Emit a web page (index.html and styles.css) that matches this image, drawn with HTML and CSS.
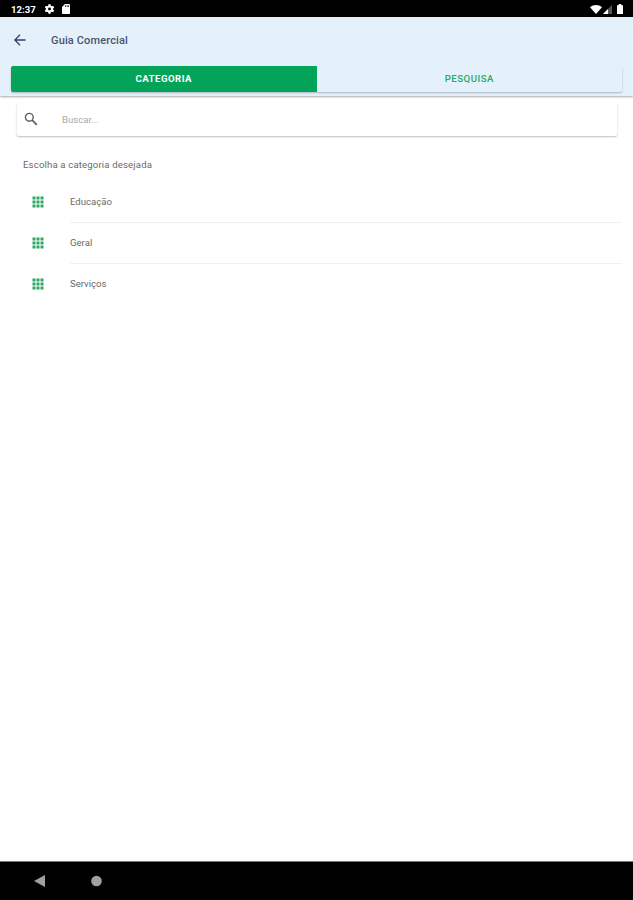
FILE: index.html
```html
<!doctype html>
<html lang="pt-BR">
<head>
<meta charset="utf-8">
<title>Guia Comercial</title>
<link rel="stylesheet" href="styles.css">
</head>
<body>
<svg class="defs">
	<symbol id="grid" viewBox="0 0 12 12">
		<path d="M0.5 0.5h3v3h-3zM4.5 0.5h3v3h-3zM8.5 0.5h3v3h-3zM0.5 4.5h3v3h-3zM4.5 4.5h3v3h-3zM8.5 4.5h3v3h-3zM0.5 8.5h3v3h-3zM4.5 8.5h3v3h-3zM8.5 8.5h3v3h-3z"/>
	</symbol>
</svg>

<div class="statusbar">
	<span class="clock">12:37</span>
	<svg class="gear" width="12" height="12" viewBox="1 1 22 22"><path fill="#fff" d="M19.400 13a7.500 7.500 0 0 0 0-2l2.100-1.600-2-3.500-2.500 1a7.400 7.400 0 0 0-1.700-1L14.900 3.200h-4l-.4 2.700a7.400 7.400 0 0 0-1.700 1l-2.500-1-2 3.500L6.400 11a7.500 7.500 0 0 0 0 2l-2.100 1.600 2 3.500 2.500-1a7.400 7.400 0 0 0 1.700 1l.4 2.700h4l.4-2.700a7.400 7.400 0 0 0 1.700-1l2.500 1 2-3.500zM12.900 14.700a2.700 2.700 0 1 1 0-5.400 2.700 2.700 0 0 1 0 5.400z"/></svg>
	<svg class="sdcard" width="12" height="12" viewBox="0 0 24 24"><path fill="#fff" d="M18 2h-8L4 8v12c0 1.100.9 2 2 2h12c1.100 0 2-.9 2-2V4c0-1.100-.9-2-2-2zm-6 6h-1.500V4.500H12zm3 0h-1.500V4.500H15zm3 0h-1.500V4.500H18z"/></svg>
	<span class="signals">
		<svg width="12" height="9" viewBox="0 0 12 9"><path fill="#fff" d="M0 2.200C3.500-.7 8.500-.7 12 2.200L6 9z"/></svg>
		<svg width="9" height="9" viewBox="0 0 9 9"><path fill="#555" d="M0 9L9 0v9z"/><path fill="#fff" d="M0 9l5-5v5z"/></svg>
		<svg class="battery" width="6" height="10" viewBox="0 0 6 10"><path fill="#fff" d="M0 1.200h1.700V0h2.600v1.200H6V10H0z"/></svg>
	</span>
</div>

<div class="header">
	<div class="title">
		<svg width="12" height="12" viewBox="0 0 12 12"><path fill="none" stroke="#343e66" stroke-width="1.300" d="M11.500 6H1.200M6 .8L.9 6 6 11.200"/></svg>
		<h1>Guia Comercial</h1>
	</div>
	<div class="tabs">
		<div class="tab active">CATEGORIA</div>
		<div class="tab">PESQUISA</div>
	</div>
</div>

<div class="content">
	<div class="search">
		<svg width="14" height="14" viewBox="0 0 14 14"><circle cx="5.300" cy="5.300" r="3.900" fill="none" stroke="#606060" stroke-width="1.400"/><path stroke="#606060" stroke-width="1.800" d="M8.200 8.200l4.600 4.600"/></svg>
		<span>Buscar...</span>
	</div>
	<p class="hint">Escolha a categoria desejada</p>
	<ul class="list">
		<li><svg class="icon"><use href="#grid"/></svg><span>Educação</span></li>
		<li><svg class="icon"><use href="#grid"/></svg><span>Geral</span></li>
		<li><svg class="icon"><use href="#grid"/></svg><span>Serviços</span></li>
	</ul>
</div>

<div class="navbar">
	<svg width="11" height="12" viewBox="0 0 11 12"><path fill="#a0a0a0" d="M11 0v12L0 6z"/></svg>
	<svg width="11" height="12" viewBox="0 0 11 12"><circle cx="5.500" cy="6" r="5.300" fill="#a0a0a0"/></svg>
</div>
</body>
</html>
```
FILE: styles.css
```css
* {
	box-sizing: border-box;
}
body {
	margin: 0;
	height: 900px;
	display: flex;
	flex-direction: column;
	background-color: #fff;
	font-family: Roboto, sans-serif;
	font-size: 9.6px;
	color: #6a6a6a;
	overflow: hidden;
}
svg {
	display: block;
	flex: none;
}
.defs {
	display: none;
}

.statusbar {
	height: 17px;
	flex: none;
	display: flex;
	align-items: center;
	padding: 1px 10px 0 11px;
	background-color: #000;
	color: #fff;
}
.clock {
	width: 32px;
	font-size: 9.6px;
	font-weight: 700;
}
.sdcard {
	margin-left: 5px;
}
.signals {
	margin-left: auto;
	display: flex;
	align-items: center;
	gap: 1px;
}
.battery {
	margin-left: 4px;
}

.header {
	height: 79px;
	flex: none;
	background-color: #e4f1fb;
	box-shadow: 0 1px 2px rgba(0, 0, 0, .35);
}
.title {
	height: 49px;
	display: flex;
	align-items: center;
	padding: 0 0 3px 14px;
	gap: 25px;
}
.title h1 {
	margin: 1px 0 0;
	font-size: 11px;
	font-weight: 500;
	letter-spacing: .14px;
	color: #4a5270;
}
.tabs {
	display: flex;
	height: 26px;
	margin: 0 11px 0 11px;
	border-radius: 2px;
	box-shadow: 0 1px 2px rgba(0, 0, 0, .25);
}
.tab {
	flex: 1;
	line-height: 26px;
	text-align: center;
	font-size: 9.6px;
	font-weight: 500;
	letter-spacing: .5px;
	color: #2ca66a;
}
.tab.active {
	background-color: #04a35a;
	color: #fff;
	font-weight: 700;
	border-radius: 2px 0 0 2px;
}

.content {
	flex: 1;
	padding-top: 7px;
}
.search {
	height: 33px;
	margin: 0 16px 0 17px;
	padding: 0 0 1px 7px;
	display: flex;
	align-items: center;
	gap: 24px;
	border-radius: 2px;
	box-shadow: 0 1px 2px rgba(0, 0, 0, .25);
	color: #a8a8a8;
}
.hint {
	margin: 22px 0 0 23px;
	line-height: 13px;
	letter-spacing: .15px;
}
.list {
	list-style: none;
	margin: 11px 0 0;
	padding: 0;
}
.list li {
	height: 41px;
	display: flex;
	align-items: center;
	padding-left: 32px;
}
.list span {
	flex: 1;
	margin: 0 11px 0 26px;
	line-height: 40px;
	border-bottom: 1px solid #f0f0f0;
}
.list li:last-child span {
	border-bottom-color: transparent;
}
.icon {
	width: 12px;
	height: 12px;
	margin-bottom: 2px;
	fill: #2fa866;
}

.navbar {
	height: 39px;
	flex: none;
	display: flex;
	align-items: center;
	padding-left: 34px;
	gap: 46px;
	background-color: #000;
	border-top: 1px solid #777;
}
```
